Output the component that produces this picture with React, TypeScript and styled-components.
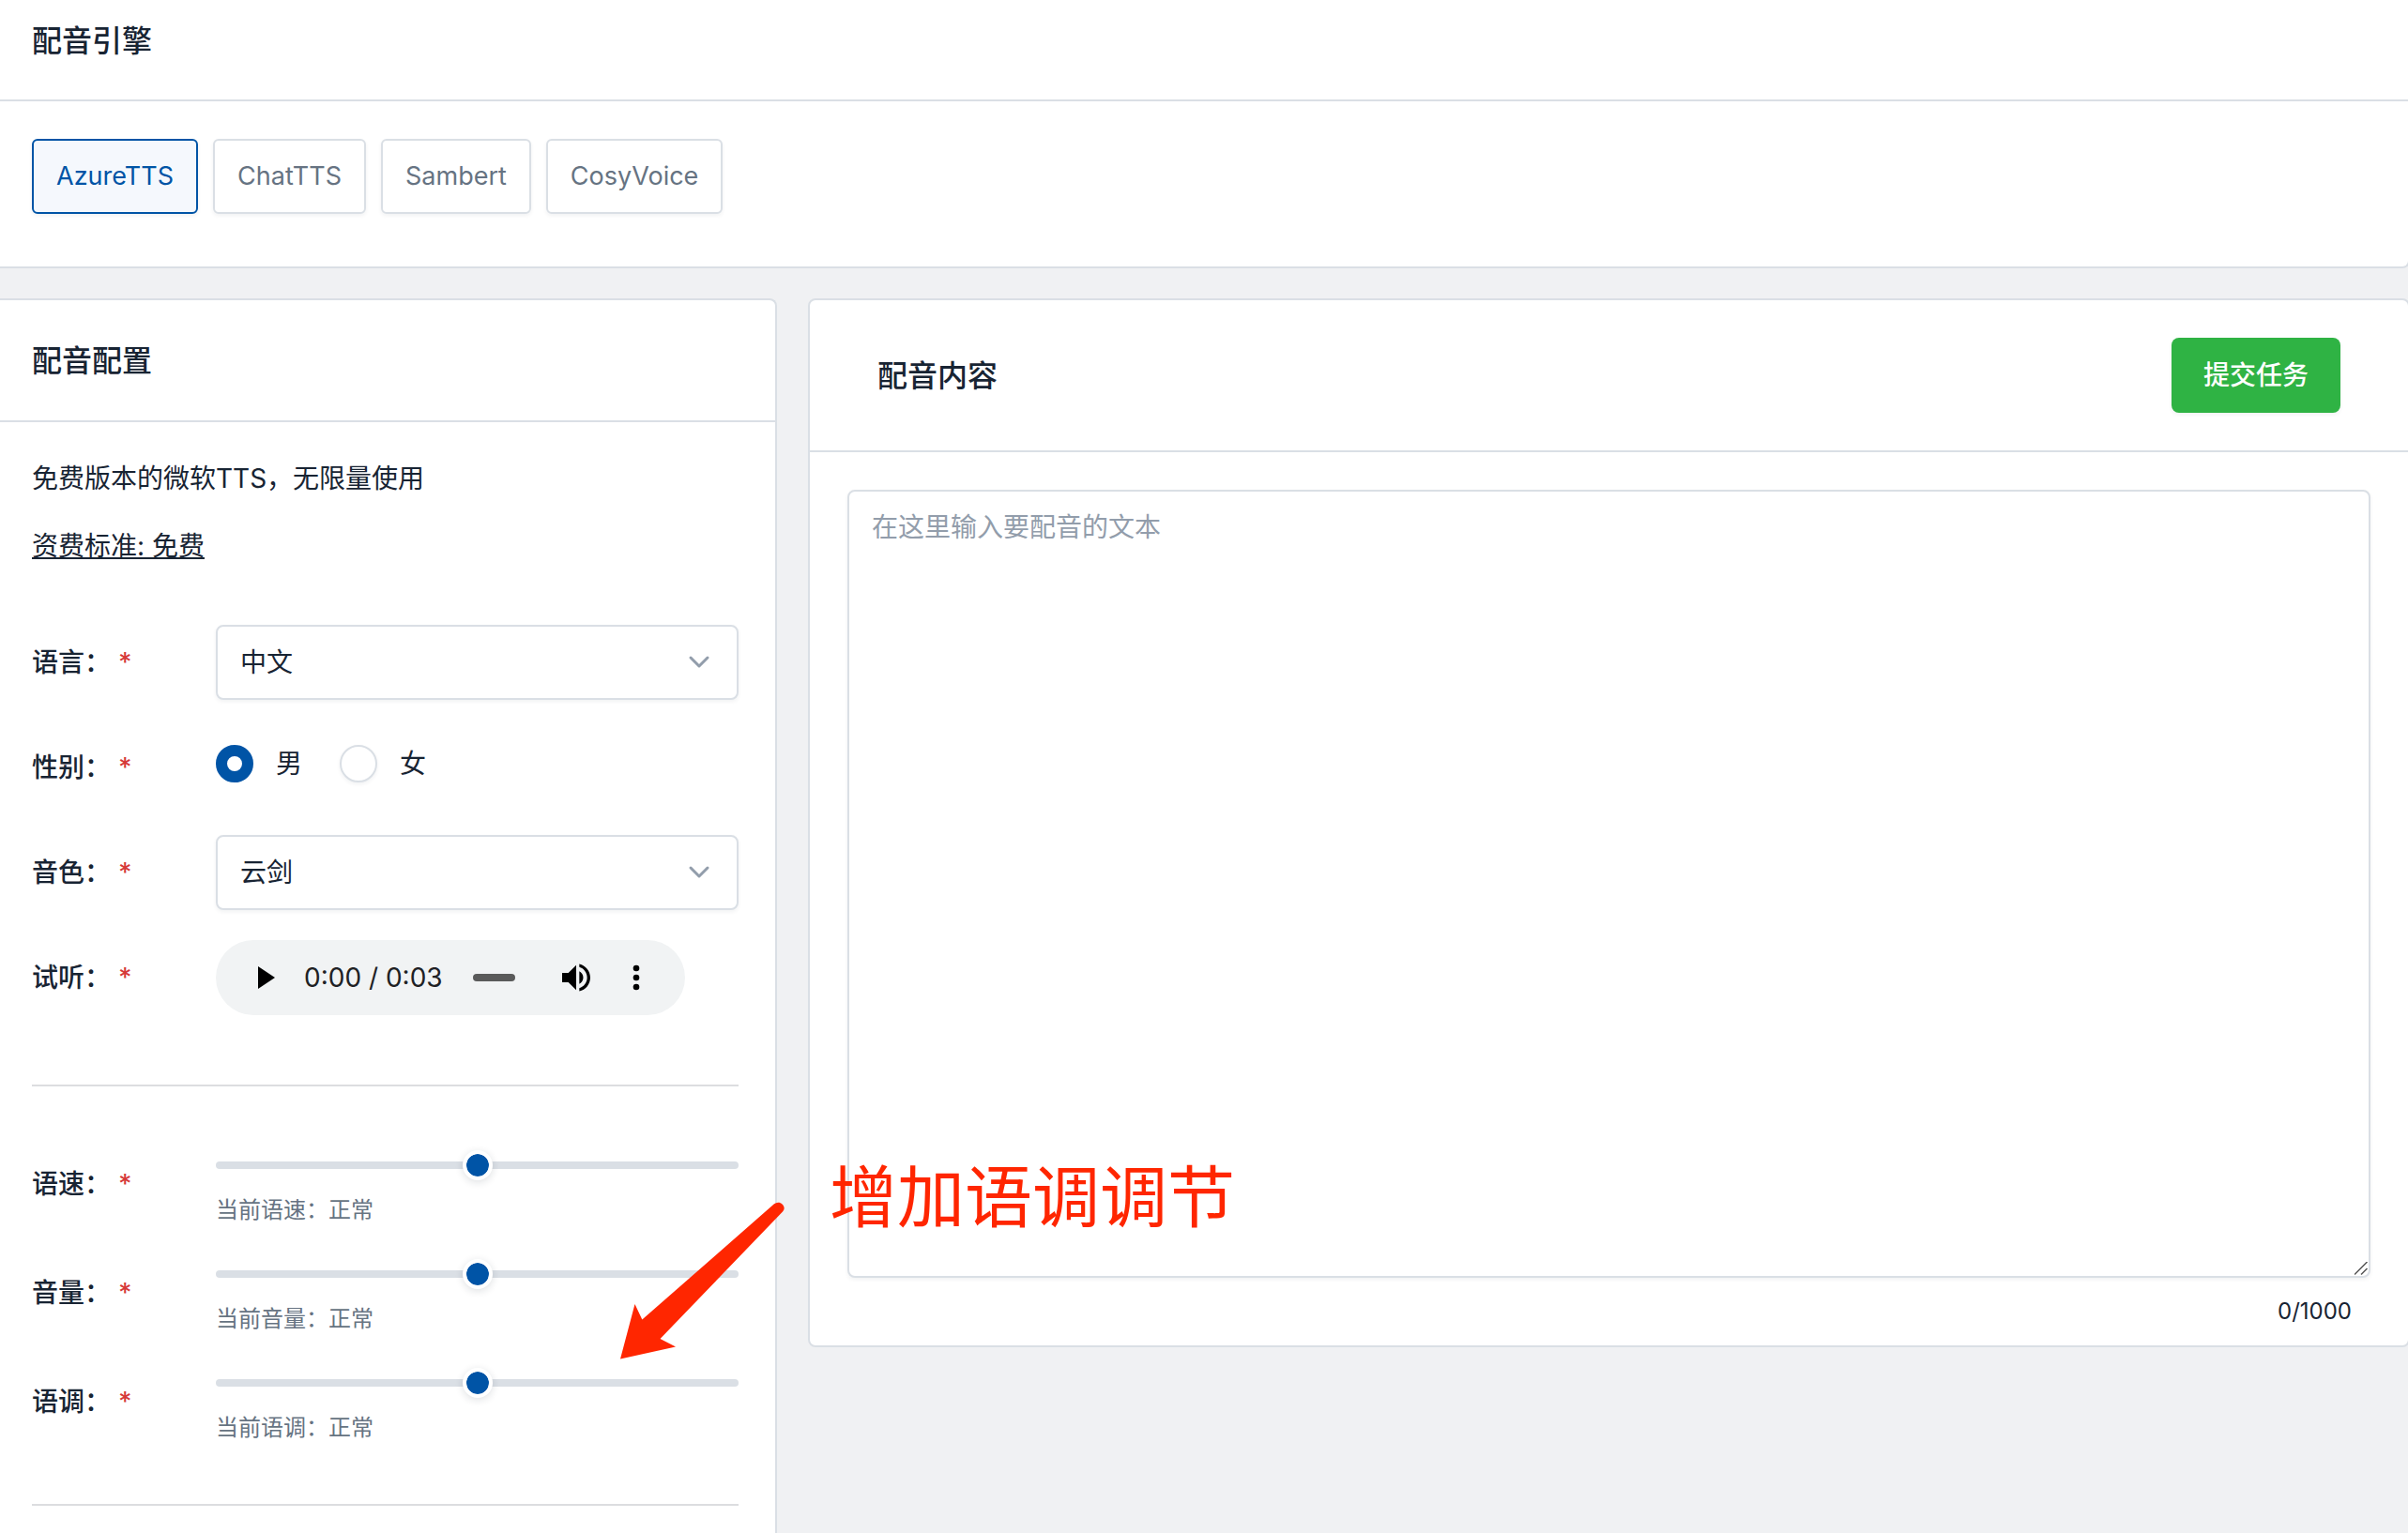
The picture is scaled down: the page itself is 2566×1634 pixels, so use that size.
import React, { useState } from "react";
import styled, { createGlobalStyle } from "styled-components";

const color = {
  text: "#182433",
  muted: "#667382",
  placeholder: "#929dab",
  border: "#dadfe5",
  rule: "#dcdde0",
  primary: "#0054a6",
  primarySoft: "#f5f8fd",
  success: "#2fb344",
  danger: "#d63939",
  page: "#f0f1f3",
  mark: "#ff2600",
};

const GlobalStyle = createGlobalStyle`
  *, *::before, *::after { box-sizing: border-box; }
  body {
    margin: 0;
    background: ${color.page};
    color: ${color.text};
    font-family: Inter, "Noto Sans CJK SC", sans-serif;
    font-size: 28px;
    line-height: 40px;
  }
  button, input, select, textarea { font: inherit; color: inherit; }
`;

const Page = styled.main`
  position: relative;
  display: flex;
  flex-direction: column;
  gap: 32px;
  min-height: 100vh;
  overflow: hidden;
`;

const Card = styled.section`
  background: #fff;
  border: 2px solid ${color.border};
  border-radius: 8px;
`;

const EngineCard = styled(Card)`
  border-top: 0;
  border-left: 0;
  border-radius: 0 0 8px 0;
  margin-right: -2px;
`;

const Workspace = styled.div`
  flex: 1;
  display: grid;
  grid-template-columns: minmax(0, 828fr) minmax(0, 1707fr);
  gap: 33px;
  align-items: start;
  margin-right: -2px;
`;

const ConfigCard = styled(Card)`
  align-self: stretch;
  border-left: 0;
  border-bottom: 0;
  border-radius: 0 8px 0 0;
`;

const CardHeader = styled.header<{ $height: number; $inset: number }>`
  display: flex;
  align-items: center;
  justify-content: space-between;
  min-height: ${(p) => p.$height}px;
  padding: 0 ${(p) => p.$inset}px;
  border-bottom: 2px solid ${color.border};
`;

const EngineHeader = styled(CardHeader)`
  align-items: flex-start;
  padding-top: 22px;
`;

const Title = styled.h2`
  margin: 0;
  padding-top: 2px;
  font-size: 32px;
  line-height: 40px;
  font-weight: 500;
`;

const EngineList = styled.div`
  display: flex;
  flex-wrap: wrap;
  gap: 16px;
  padding: 40px 34px 56px;
`;

const EngineButton = styled.button<{ $active: boolean }>`
  height: 80px;
  padding: 0 24px;
  border: 2px solid ${(p) => (p.$active ? color.primary : color.border)};
  border-radius: 6px;
  background: ${(p) => (p.$active ? color.primarySoft : "#fff")};
  color: ${(p) => (p.$active ? color.primary : color.muted)};
  box-shadow: 0 2px 4px rgba(24, 36, 51, 0.06);
  font-size: 27px;
  cursor: pointer;
`;

const ConfigBody = styled.div`
  padding: 40px 39px 28px 34px;
`;

const Note = styled.p`
  margin: 0 0 32px;
`;

const Price = styled.p`
  margin: 0 0 64px;
`;

const PriceLink = styled.a`
  color: inherit;
  text-decoration: underline;
  text-decoration-thickness: 2px;
  text-underline-offset: 2px;
`;

const Fields = styled.div<{ $gap: number }>`
  display: grid;
  gap: ${(p) => p.$gap}px;
`;

const Field = styled.div`
  display: grid;
  grid-template-columns: 196px minmax(0, 1fr);
  align-items: center;
  min-height: 80px;
`;

const FieldLabel = styled.label`
  font-weight: 500;
`;

const Required = styled.span`
  margin-left: 8px;
  color: ${color.danger};
`;

const SelectBox = styled.div`
  display: grid;
  align-items: center;

  > * { grid-area: 1 / 1; }
  > svg { justify-self: end; margin-right: 30px; pointer-events: none; }
`;

const Select = styled.select`
  appearance: none;
  width: 100%;
  height: 80px;
  padding: 0 72px 0 24px;
  border: 2px solid ${color.border};
  border-radius: 8px;
  background: #fff;
  box-shadow: 0 2px 4px rgba(24, 36, 51, 0.06);
`;

const RadioGroup = styled.div`
  display: flex;
  gap: 40px;
  padding-bottom: 8px;
`;

const RadioLabel = styled.label`
  display: flex;
  align-items: center;
  gap: 24px;
`;

const Radio = styled.input`
  appearance: none;
  width: 40px;
  height: 40px;
  margin: 0;
  border: 2px solid ${color.border};
  border-radius: 50%;
  background: #fff;
  box-shadow: 0 2px 4px rgba(24, 36, 51, 0.06);

  &:checked {
    border: 12px solid ${color.primary};
    box-shadow: none;
  }
`;

const Player = styled.div`
  display: flex;
  align-items: center;
  width: 500px;
  max-width: 100%;
  height: 80px;
  padding: 0 20px;
  border-radius: 40px;
  background: #f1f3f4;
`;

const PlayerButton = styled.button`
  display: grid;
  flex: none;
  place-items: center;
  width: 64px;
  height: 64px;
  padding: 0;
  border: 0;
  background: none;
  color: #000;
`;

const PlayerTime = styled.span`
  padding: 0 32px 0 10px;
  color: #202124;
  white-space: nowrap;
`;

const PlayerSeek = styled.input`
  appearance: none;
  flex: 1;
  min-width: 0;
  height: 8px;
  margin: 0 33px 0 0;
  border-radius: 4px;
  background: #5a5a5a;

  &::-webkit-slider-thumb { appearance: none; width: 0; height: 0; }
`;

const Rule = styled.hr`
  height: 2px;
  margin: 74px 0 60px;
  border: 0;
  background: ${color.rule};
`;

const EndRule = styled(Rule)`
  margin: 65px 0 0;
`;

const SliderBox = styled.div`
  display: grid;
  gap: 8px;
`;

const Slider = styled.input`
  appearance: none;
  width: 100%;
  height: 48px;
  margin: 0;
  background: none;

  &::-webkit-slider-runnable-track {
    height: 8px;
    border-radius: 4px;
    background: ${color.border};
  }

  &::-webkit-slider-thumb {
    appearance: none;
    width: 32px;
    height: 32px;
    margin-top: -12px;
    border: 4px solid #fff;
    border-radius: 50%;
    background: ${color.primary};
    background-clip: padding-box;
    box-shadow: 0 2px 8px rgba(24, 36, 51, 0.14);
  }
`;

const Hint = styled.small`
  color: ${color.muted};
  font-size: 24px;
  line-height: 32px;
`;

const SubmitButton = styled.button`
  height: 80px;
  padding: 0 34px;
  border: 0;
  border-radius: 8px;
  background: ${color.success};
  box-shadow: 0 2px 4px rgba(24, 36, 51, 0.06);
  color: #fff;
  font-weight: 500;
  cursor: pointer;
`;

const ContentBody = styled.div`
  display: flex;
  flex-direction: column;
  padding: 40px 40px 18px;
`;

const grip =
  "data:image/svg+xml,%3Csvg xmlns='http://www.w3.org/2000/svg' width='15' height='15' fill='none' stroke='%23555' stroke-width='1.5'%3E%3Cpath d='M0 13.5L13.5 0M7 13.5L13.5 7'/%3E%3C/svg%3E";

const TextArea = styled.textarea`
  display: block;
  width: 100%;
  height: 840px;
  padding: 18px 24px;
  border: 2px solid ${color.border};
  border-radius: 8px;
  background: #fff;
  box-shadow: 0 2px 4px rgba(24, 36, 51, 0.06);
  resize: vertical;

  &::placeholder { color: ${color.placeholder}; opacity: 1; }
  &::-webkit-resizer { background: url("${grip}") no-repeat; }
`;

const Counter = styled.output`
  align-self: flex-end;
  padding: 18px 20px 0 0;
  font-size: 24px;
  line-height: 36px;
`;

/* Hand-drawn markup laid over the page: an arrow and its caption. */
const Arrow = styled.svg`
  position: absolute;
  left: 660px;
  top: 1280px;
  width: 180px;
  height: 170px;
  pointer-events: none;
`;

const Caption = styled.p`
  position: absolute;
  left: 884px;
  top: 1228px;
  margin: 0;
  color: ${color.mark};
  font-size: 72px;
  line-height: 96px;
  white-space: nowrap;
  pointer-events: none;
`;

const Chevron = () => (
  <svg width="24" height="16" viewBox="0 0 24 16" fill="none" stroke="#929dab" strokeWidth="3" strokeLinecap="round" strokeLinejoin="round" aria-hidden="true">
    <path d="M3 3l9 9l9-9" />
  </svg>
);

const PlayIcon = () => (
  <svg width="48" height="48" viewBox="0 0 24 24" fill="currentColor" aria-hidden="true">
    <path d="M8.500 6v12l9-6z" />
  </svg>
);

const VolumeIcon = () => (
  <svg width="40" height="40" viewBox="0 0 24 24" fill="currentColor" aria-hidden="true">
    <path d="M3 9v6h4l5 5V4L7 9H3zm13.5 3c0-1.77-1.02-3.29-2.5-4.03v8.05c1.48-.73 2.5-2.25 2.5-4.02zM14 3.23v2.06c2.89.86 5 3.54 5 6.71s-2.11 5.85-5 6.71v2.06c4.01-.91 7-4.49 7-8.77s-2.99-7.86-7-8.77z" />
  </svg>
);

const MoreIcon = () => (
  <svg width="40" height="40" viewBox="0 0 24 24" fill="currentColor" aria-hidden="true">
    <circle cx="12" cy="6" r="2" />
    <circle cx="12" cy="12" r="2" />
    <circle cx="12" cy="18" r="2" />
  </svg>
);

const engines = ["AzureTTS", "ChatTTS", "Sambert", "CosyVoice"];
const sliders = [
  { id: "rate", name: "语速" },
  { id: "volume", name: "音量" },
  { id: "pitch", name: "语调" },
];

function LabelFor({ id, children }: { id: string; children: string }) {
  return (
    <FieldLabel htmlFor={id}>
      {children}：<Required>*</Required>
    </FieldLabel>
  );
}

function SelectField({ id, label, options }: { id: string; label: string; options: string[] }) {
  return (
    <Field>
      <LabelFor id={id}>{label}</LabelFor>
      <SelectBox>
        <Select id={id}>
          {options.map((o) => (
            <option key={o}>{o}</option>
          ))}
        </Select>
        <Chevron />
      </SelectBox>
    </Field>
  );
}

export default function App() {
  const [engine, setEngine] = useState(engines[0]);
  const [text, setText] = useState("");

  return (
    <>
      <GlobalStyle />
      <Page>
        <EngineCard>
          <EngineHeader $height={108} $inset={34}>
            <Title>配音引擎</Title>
          </EngineHeader>
          <EngineList>
            {engines.map((name) => (
              <EngineButton key={name} type="button" $active={name === engine} onClick={() => setEngine(name)}>
                {name}
              </EngineButton>
            ))}
          </EngineList>
        </EngineCard>

        <Workspace>
          <ConfigCard>
            <CardHeader $height={130} $inset={34}>
              <Title>配音配置</Title>
            </CardHeader>
            <ConfigBody>
              <Note>免费版本的微软TTS，无限量使用</Note>
              <Price>
                <PriceLink href="#pricing">资费标准: 免费</PriceLink>
              </Price>
              <Fields $gap={32}>
                <SelectField id="language" label="语言" options={["中文"]} />
                <Field>
                  <LabelFor id="male">性别</LabelFor>
                  <RadioGroup>
                    <RadioLabel>
                      <Radio id="male" type="radio" name="gender" defaultChecked />男
                    </RadioLabel>
                    <RadioLabel>
                      <Radio type="radio" name="gender" />女
                    </RadioLabel>
                  </RadioGroup>
                </Field>
                <SelectField id="voice" label="音色" options={["云剑"]} />
                <Field>
                  <LabelFor id="seek">试听</LabelFor>
                  <Player>
                    <PlayerButton type="button" aria-label="播放">
                      <PlayIcon />
                    </PlayerButton>
                    <PlayerTime>0:00 / 0:03</PlayerTime>
                    <PlayerSeek id="seek" type="range" min={0} max={3} defaultValue={0} />
                    <PlayerButton type="button" aria-label="静音">
                      <VolumeIcon />
                    </PlayerButton>
                    <PlayerButton type="button" aria-label="更多">
                      <MoreIcon />
                    </PlayerButton>
                  </Player>
                </Field>
              </Fields>
              <Rule />
              <Fields $gap={28}>
                {sliders.map(({ id, name }) => (
                  <Field key={id}>
                    <LabelFor id={id}>{name}</LabelFor>
                    <SliderBox>
                      <Slider id={id} type="range" min={-100} max={100} defaultValue={0} />
                      <Hint>当前{name}：正常</Hint>
                    </SliderBox>
                  </Field>
                ))}
              </Fields>
              <EndRule />
            </ConfigBody>
          </ConfigCard>

          <Card>
            <CardHeader $height={162} $inset={72}>
              <Title>配音内容</Title>
              <SubmitButton type="button">提交任务</SubmitButton>
            </CardHeader>
            <ContentBody>
              <TextArea
                aria-label="配音内容"
                placeholder="在这里输入要配音的文本"
                maxLength={1000}
                value={text}
                onChange={(e) => setText(e.target.value)}
              />
              <Counter>{text.length}/1000</Counter>
            </ContentBody>
          </Card>
        </Workspace>

        <Arrow viewBox="0 0 180 170" fill={color.mark} aria-hidden="true">
          <path d="M1 168.500 L16.500 110 L24.300 126.500 L163.500 4.500 C167 1 171 1 173.500 3.500 C176.500 6.500 176 9 174 11.500 L43.500 147 L60 155.500 Z" />
        </Arrow>
        <Caption>增加语调调节</Caption>
      </Page>
    </>
  );
}
